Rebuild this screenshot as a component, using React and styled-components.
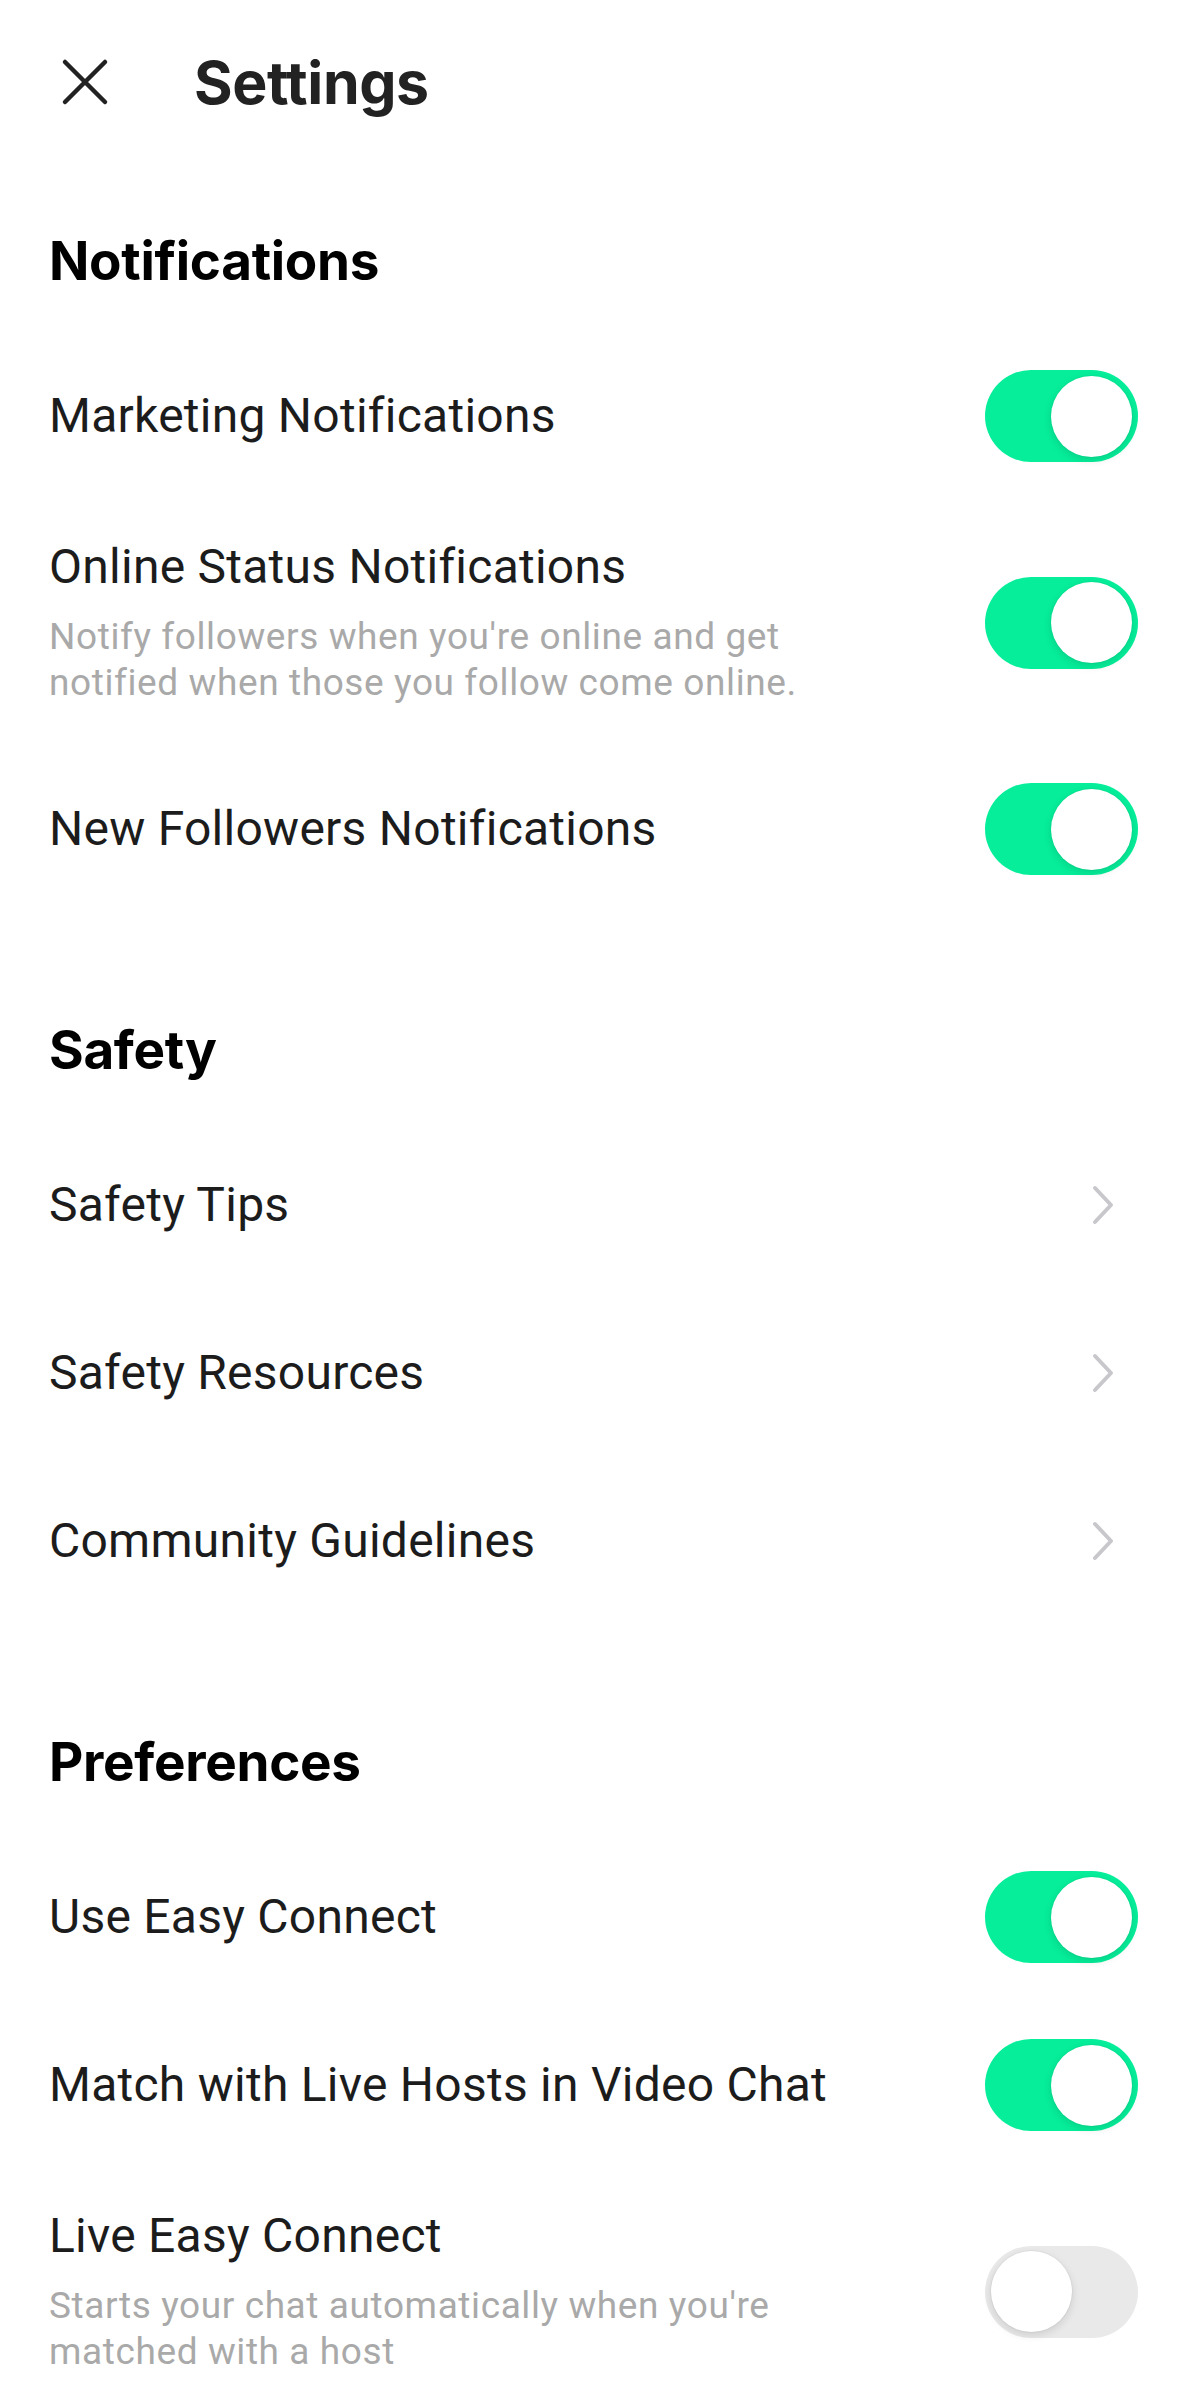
import styled, { createGlobalStyle } from 'styled-components';

const GlobalStyle = createGlobalStyle`
  body {
    margin: 0;
    background: #ffffff;
    font-family: Roboto, "Liberation Sans", sans-serif;
    -webkit-font-smoothing: antialiased;
  }
`;

const Page = styled.div`
  width: 1179px;
  min-height: 2396px;
  background: #ffffff;
  overflow: hidden;
`;

const Header = styled.header`
  display: flex;
  align-items: center;
  height: 84px;
  padding: 40px 0 0 58px;
  gap: 82px;
`;

const CloseButton = styled.button`
  width: 54px;
  height: 54px;
  padding: 0;
  border: none;
  background: none;
  display: flex;
  align-items: center;
  justify-content: center;
`;

const Title = styled.h1`
  margin: 0;
  font-family: Inter, Roboto, sans-serif;
  font-size: 59px;
  font-weight: 700;
  color: #222222;
  letter-spacing: -0.4px;
`;

const Section = styled.section`
  padding-top: 105px;
`;

const SectionTitle = styled.h2`
  margin: 0;
  padding: 0 49px 39px;
  font-family: Inter, Roboto, sans-serif;
  font-size: 53px;
  line-height: 64px;
  font-weight: 700;
  color: #000000;
  letter-spacing: -0.3px;
`;

const Row = styled.div`
  display: flex;
  align-items: center;
  justify-content: space-between;
  min-height: 168px;
  box-sizing: border-box;
  padding: ${p => (p.$tall ? '39px' : '0')} 41px ${p => (p.$tall ? '39px' : '0')} 49px;
`;

const RowText = styled.div`
  display: flex;
  flex-direction: column;
  gap: 19px;
  max-width: 800px;
`;

const RowLabel = styled.div`
  font-size: 48px;
  line-height: 56px;
  color: #1c1c1c;
  letter-spacing: 0.25px;
`;

const RowHint = styled.div`
  font-size: 37px;
  line-height: 46px;
  color: #a9a9a9;
  letter-spacing: 0.6px;
`;

const Track = styled.div`
  width: 153px;
  height: 92px;
  border-radius: 46px;
  background: ${p => (p.$on ? '#06ee9a' : '#e9e9ea')};
  display: flex;
  align-items: center;
  justify-content: ${p => (p.$on ? 'flex-end' : 'flex-start')};
  padding: 0 6px;
  box-sizing: border-box;
  flex-shrink: 0;
`;

const Knob = styled.div`
  width: 81px;
  height: 81px;
  border-radius: 50%;
  background: #ffffff;
  box-shadow: 0 3px 8px rgba(0, 0, 0, 0.12), 0 0 0 1px rgba(0, 0, 0, 0.03);
`;

const Chevron = styled.svg`
  width: 22px;
  height: 40px;
  margin-right: 24px;
  flex-shrink: 0;
`;

const Toggle = ({ on }) => (
  <Track $on={on}>
    <Knob />
  </Track>
);

const sections = [
  {
    title: 'Notifications',
    rows: [
      { label: 'Marketing Notifications', toggle: true },
      {
        label: 'Online Status Notifications',
        hint: "Notify followers when you're online and get notified when those you follow come online.",
        toggle: true,
      },
      { label: 'New Followers Notifications', toggle: true },
    ],
  },
  {
    title: 'Safety',
    rows: [
      { label: 'Safety Tips' },
      { label: 'Safety Resources' },
      { label: 'Community Guidelines' },
    ],
  },
  {
    title: 'Preferences',
    rows: [
      { label: 'Use Easy Connect', toggle: true },
      { label: 'Match with Live Hosts in Video Chat', toggle: true },
      {
        label: 'Live Easy Connect',
        hint: "Starts your chat automatically when you're matched with a host",
        toggle: false,
      },
    ],
  },
];

export default function App() {
  return (
    <Page>
      <GlobalStyle />
      <Header>
        <CloseButton aria-label="Close">
          <svg width="48" height="48" viewBox="0 0 48 48">
            <path d="M4 4 L44 44 M44 4 L4 44" stroke="#222" strokeWidth="4.5" strokeLinecap="round" />
          </svg>
        </CloseButton>
        <Title>Settings</Title>
      </Header>

      {sections.map(section => (
        <Section key={section.title}>
          <SectionTitle>{section.title}</SectionTitle>
          {section.rows.map(row => (
            <Row key={row.label} $tall={!!row.hint}>
              <RowText>
                <RowLabel>{row.label}</RowLabel>
                {row.hint && <RowHint>{row.hint}</RowHint>}
              </RowText>
              {row.toggle === undefined ? (
                <Chevron viewBox="0 0 22 40">
                  <path d="M3 3 L19 20 L3 37" fill="none" stroke="#c8c8cc" strokeWidth="4" strokeLinecap="round" strokeLinejoin="round" />
                </Chevron>
              ) : (
                <Toggle on={row.toggle} />
              )}
            </Row>
          ))}
        </Section>
      ))}
    </Page>
  );
}
